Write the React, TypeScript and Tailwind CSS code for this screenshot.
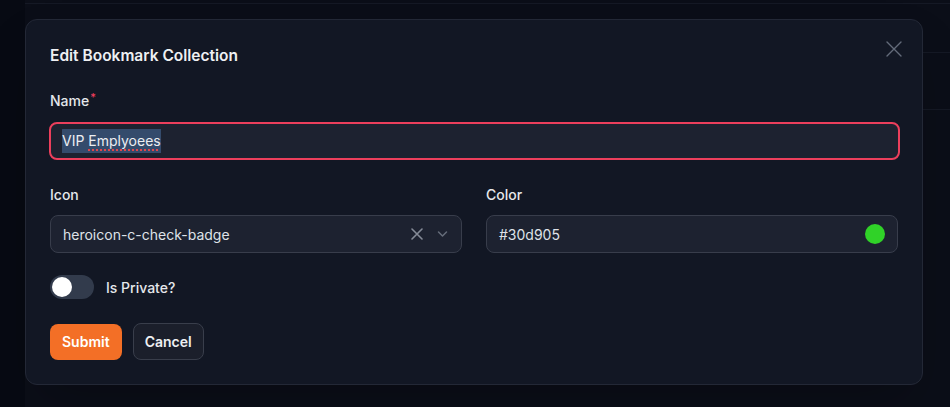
import React from "react";

export default function App() {
  const font = { fontFamily: "Inter, 'Noto Sans', sans-serif" };
  return (
    <div className="relative w-[950px] h-[407px] overflow-hidden bg-[#0b0e18]" style={font}>
      {/* background decorations */}
      <div className="absolute left-0 top-0 h-full w-[25px] bg-[#070a13]" />
      <div className="absolute left-[25px] right-0 top-[3px] h-px bg-[#151925]" />
      <div className="absolute left-[922px] right-0 top-[52px] h-px bg-[#151925]" />
      <div className="absolute left-[922px] right-0 top-[109px] h-px bg-[#151925]" />

      <div className="relative pl-[25px] pt-[19px]">
        <div className="relative w-[898px] h-[366px] rounded-xl border border-[#232836] bg-[#121724] px-[24px] pt-[24px] shadow-2xl">
          <button className="absolute right-[18px] top-[19px] text-[#636b7a]">
            <svg width="20" height="20" viewBox="0 0 20 20" fill="none" stroke="currentColor" strokeWidth="1.4" strokeLinecap="round">
              <path d="M3 3l14 14M17 3L3 17" />
            </svg>
          </button>
          <h2 className="text-[15.5px] leading-6 font-semibold text-[#eef0f3]">Edit Bookmark Collection</h2>

          <div className="mt-[23px]">
            <label className="block text-[14px] leading-5 font-medium text-[#e5e7eb]">
              Name<span className="relative -top-[5px] text-[#f43f5e] text-[11px] ml-[1px]">*</span>
            </label>
            <div className="mt-[10px] h-[38px] w-[851px] -ml-px rounded-lg border-2 border-[#ec3f5c] bg-[#1d2230] flex items-center px-[11px]">
              <span className="text-[14px] leading-6 text-[#eceef2] bg-[#344b6c]">
                VIP{" "}
                <span className="underline decoration-dotted decoration-[#e0464c] decoration-2 underline-offset-[3px]">Emplyoees</span>
              </span>
            </div>
          </div>

          <div className="mt-[25px] grid grid-cols-2 gap-[24px]">
            <div>
              <label className="block text-[14px] leading-5 font-medium text-[#e5e7eb]">Icon</label>
              <div className="mt-[10px] h-[38px] rounded-lg border border-[#383d4b] bg-[#1d2230] flex items-center pl-[12px] pr-[13px]">
                <span className="flex-1 text-[14px] text-[#dfe2e8]">heroicon-c-check-badge</span>
                <svg width="12" height="12" viewBox="0 0 12 12" fill="none" stroke="#858b97" strokeWidth="1.6" strokeLinecap="round">
                  <path d="M1 1l10 10M11 1L1 11" />
                </svg>
                <svg className="ml-[14px]" width="11" height="8" viewBox="0 0 11 8" fill="none" stroke="#666d7a" strokeWidth="1.5" strokeLinecap="round" strokeLinejoin="round">
                  <path d="M1.5 2l4 4 4-4" />
                </svg>
              </div>
            </div>
            <div>
              <label className="block text-[14px] leading-5 font-medium text-[#e5e7eb]">Color</label>
              <div className="mt-[10px] h-[38px] rounded-lg border border-[#383d4b] bg-[#1d2230] flex items-center pl-[12px] pr-[12px]">
                <span className="flex-1 text-[14px] text-[#dfe2e8]">#30d905</span>
                <span className="h-[20px] w-[20px] rounded-full bg-[#30d228]" />
              </div>
            </div>
          </div>

          <div className="mt-[22px] flex items-center gap-[12px]">
            <div className="relative h-[24px] w-[44px] rounded-full bg-[#323b4c]">
              <div className="absolute left-[2px] top-[2px] h-[20px] w-[20px] rounded-full bg-white" />
            </div>
            <span className="text-[14px] font-medium text-[#e5e7eb]">Is Private?</span>
          </div>

          <div className="mt-[24px] flex items-center gap-[11px]">
            <button className="h-[36px] px-[12px] rounded-lg bg-[#f36f26] text-[14px] font-semibold text-white">Submit</button>
            <button className="h-[37px] px-[11px] rounded-lg border border-[#393e4b] bg-[#1b1f2b] text-[14px] font-semibold text-[#eef0f3]">Cancel</button>
          </div>
        </div>
      </div>
    </div>
  );
}
